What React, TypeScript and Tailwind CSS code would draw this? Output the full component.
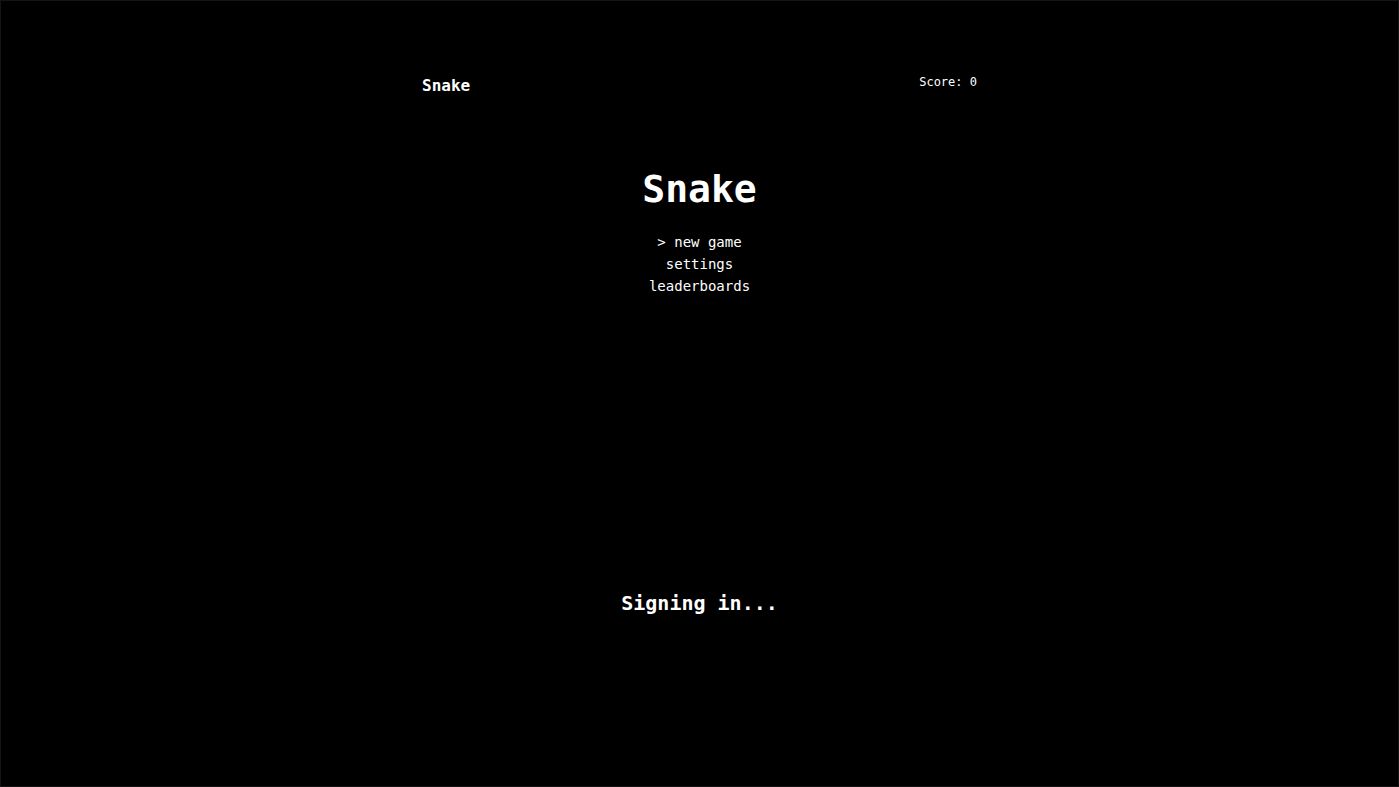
import React, { useState } from 'react';

const menuItems = ['new game', 'settings', 'leaderboards'];

const App: React.FC = () => {
  const [selected, setSelected] = useState(0);
  const score = 0;

  return (
    <div className="min-h-screen bg-black border border-[#141414] text-white font-['DejaVu_Sans_Mono','Liberation_Mono',monospace]">
      <div className="w-full max-w-[555px] mx-auto pt-[70px]">
        <header className="flex items-start justify-between">
          <h2 className="text-base leading-[30px] font-bold">Snake</h2>
          <p className="text-xs leading-[22px]">Score: {score}</p>
        </header>

        <main className="flex flex-col items-center pt-16">
          <h1 className="text-[38px] leading-[48px] font-bold">Snake</h1>

          {/* Menu */}
          <nav className="mt-[18px]">
            <ul className="flex flex-col items-center">
              {menuItems.map((item, index) => (
                <li key={item} className="flex">
                  <button
                    type="button"
                    className="text-sm leading-[22px] outline-none"
                    onFocus={() => setSelected(index)}
                    onMouseEnter={() => setSelected(index)}
                  >
                    {selected === index ? `> ${item}` : item}
                  </button>
                </li>
              ))}
            </ul>
          </nav>

          <p role="status" className="mt-[290px] text-xl leading-8 font-bold">
            Signing in...
          </p>
        </main>
      </div>
    </div>
  );
};

export default App;
